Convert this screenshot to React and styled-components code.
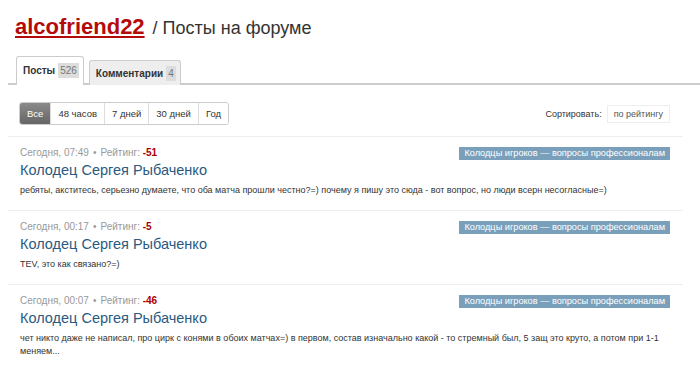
import React from 'react';
import styled, { createGlobalStyle } from 'styled-components';

const GlobalStyle = createGlobalStyle`
  body {
    margin: 0;
    background: #fff;
    font-family: "Liberation Sans", Arial, sans-serif;
    color: #333;
  }
`;

const Page = styled.div`
  width: 700px;
  padding: 12px 17px 0 8px;
  box-sizing: border-box;
`;

const Heading = styled.h1`
  margin: 0 0 0 7px;
  font-size: 18px;
  font-weight: normal;
  color: #333;
  line-height: 30px;
`;

const UserLink = styled.a`
  color: #b50a0a;
  font-size: 22px;
  font-weight: bold;
  text-decoration: underline;
  margin-right: 8px;
`;

const TabBar = styled.div`
  display: flex;
  align-items: flex-end;
  gap: 5px;
  margin: 13px -17px 0 0;
  padding-left: 8px;
  border-bottom: 2px solid #ccc;
`;

const Tab = styled.div`
  display: flex;
  align-items: center;
  gap: 3px;
  padding: 0 4px 0 6px;
  border: 1px solid #ccc;
  border-bottom: none;
  border-radius: 3px 3px 0 0;
  font-size: 10px;
  font-weight: bold;
  color: #333;
  margin-bottom: -2px;
  background: ${p => (p.$active ? '#fff' : '#eee')};
  height: ${p => (p.$active ? '26px' : '24px')};
  padding-bottom: ${p => (p.$active ? '2px' : '0')};
`;

const Count = styled.span`
  background: #ddd;
  color: #777;
  font-weight: normal;
  font-size: 10px;
  padding: 2px 2px;
`;

const Toolbar = styled.div`
  display: flex;
  justify-content: space-between;
  align-items: center;
  margin: 17px 13px 0 11px;
`;

const Filters = styled.div`
  display: flex;
  border: 1px solid #ccc;
  border-radius: 3px;
  overflow: hidden;
`;

const FilterBtn = styled.div`
  height: 21px;
  line-height: 21px;
  padding: 0 7px;
  font-size: 9.5px;
  color: ${p => (p.$active ? '#fff' : '#333')};
  background: ${p => (p.$active ? 'linear-gradient(#8a8a8a, #666)' : '#fff')};
  border-left: ${p => (p.$first ? 'none' : '1px solid #ddd')};
`;

const Sort = styled.div`
  display: flex;
  align-items: center;
  gap: 5px;
  font-size: 9px;
  color: #333;
`;

const SortBtn = styled.div`
  border: 1px solid #eee;
  height: 16px;
  line-height: 16px;
  padding: 0 6px;
  color: #555;
`;

const Post = styled.div`
  border-top: 1px solid #eee;
  margin-top: ${p => (p.$first ? '11px' : '0')};
  padding: 9px 13px 13px 12px;
`;

const MetaRow = styled.div`
  display: flex;
  justify-content: space-between;
  align-items: center;
  height: 12px;
`;

const Meta = styled.div`
  font-size: 10px;
  color: #999;
`;

const Dot = styled.span`
  margin: 0 4px;
`;

const Rating = styled.b`
  color: #a00;
`;

const ForumTag = styled.span`
  background: #7a9fbb;
  color: #fff;
  font-size: 9.2px;
  padding: 0 5px;
  line-height: 13px;
  margin-top: 2px;
`;

const Title = styled.a`
  display: block;
  font-size: 14.5px;
  color: #2a5a80;
  text-decoration: none;
  margin-top: 2px;
  line-height: 20px;
`;

const Body = styled.div`
  font-size: 9px;
  color: #333;
  margin-top: 4px;
  line-height: 13px;
  min-height: 13px;
`;

const posts = [
  {
    time: 'Сегодня, 07:49',
    rating: '-51',
    text: 'ребяты, акститесь, серьезно думаете, что оба матча прошли честно?=) почему я пишу это сюда - вот вопрос, но люди всерн несогласные=)',
  },
  { time: 'Сегодня, 00:17', rating: '-5', text: 'TEV, это как связано?=)' },
  {
    time: 'Сегодня, 00:07',
    rating: '-46',
    text: 'чет никто даже не написал, про цирк с конями в обоих матчах=) в первом, состав изначально какой - то стремный был, 5 защ это круто, а потом при 1-1 меняем...',
  },
];

const filters = ['Все', '48 часов', '7 дней', '30 дней', 'Год'];

export default function App() {
  return (
    <Page>
      <GlobalStyle />
      <Heading>
        <UserLink>alcofriend22</UserLink>/ Посты на форуме
      </Heading>
      <TabBar>
        <Tab $active>
          Посты <Count>526</Count>
        </Tab>
        <Tab>
          Комментарии <Count>4</Count>
        </Tab>
      </TabBar>
      <Toolbar>
        <Filters>
          {filters.map((f, i) => (
            <FilterBtn key={f} $active={i === 0} $first={i === 0}>
              {f}
            </FilterBtn>
          ))}
        </Filters>
        <Sort>
          Сортировать: <SortBtn>по рейтингу</SortBtn>
        </Sort>
      </Toolbar>
      {posts.map((p, i) => (
        <Post key={i} $first={i === 0}>
          <MetaRow>
            <Meta>
              {p.time}
              <Dot>•</Dot>Рейтинг: <Rating>{p.rating}</Rating>
            </Meta>
            <ForumTag>Колодцы игроков — вопросы профессионалам</ForumTag>
          </MetaRow>
          <Title>Колодец Сергея Рыбаченко</Title>
          <Body>{p.text}</Body>
        </Post>
      ))}
    </Page>
  );
}
